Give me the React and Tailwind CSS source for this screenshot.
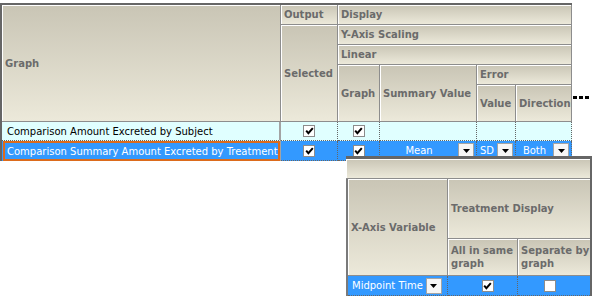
import React from 'react';

const hdr =
  'bg-linear-to-b from-[#c9c5b5] to-[#ece9da] border-r border-b border-[#8d8d8d] shadow-[inset_1px_1px_0_#fff] flex items-center pl-[3px] font-bold text-[#6b6b6b] leading-[13px]';
const cell = 'border-r border-b border-dotted border-[#666] flex items-center';

const Check = ({ checked }) => (
  <span className="w-[12px] h-[12px] border border-[#8c8c8c] bg-white flex items-center justify-center">
    {checked && (
      <svg width="9" height="8" viewBox="0 0 9 8">
        <path d="M1.2 3.6 L3.4 6.2 L7.8 1.2" stroke="#000" strokeWidth="2" fill="none" />
      </svg>
    )}
  </span>
);

const Drop = ({ className = '' }) => (
  <span className={'w-[16px] h-[16px] shrink-0 bg-[#f6f6f6] border border-[#a4a4a4] flex items-center justify-center ' + className}>
    <svg width="7" height="4" viewBox="0 0 7 4">
      <path d="M0 0h7L3.5 4z" fill="#000" />
    </svg>
  </span>
);

export default function App() {
  return (
    <div className="relative w-[595px] h-[298px] bg-white overflow-hidden font-['DejaVu_Sans',sans-serif] text-[10px] text-black">
      <div className="flex items-start">
        {/* grilla principal */}
        <div className="mt-[3px] grid grid-cols-[279px_57px_42px_97px_39px_56px] grid-rows-[20px_20px_20px_20px_37px_19px_20px] border-t-2 border-l-2 border-[#666]">
          <div className={hdr + ' col-start-1 row-start-1 row-span-5'}>Graph</div>
          <div className={hdr + ' col-start-2 row-start-1'}>Output</div>
          <div className={hdr + ' col-start-3 col-span-4 row-start-1'}>Display</div>
          <div className={hdr + ' col-start-2 row-start-2 row-span-4'}>Selected</div>
          <div className={hdr + ' col-start-3 col-span-4 row-start-2'}>Y-Axis Scaling</div>
          <div className={hdr + ' col-start-3 col-span-4 row-start-3'}>Linear</div>
          <div className={hdr + ' col-start-3 row-start-4 row-span-2'}>Graph</div>
          <div className={hdr + ' col-start-4 row-start-4 row-span-2'}>Summary Value</div>
          <div className={hdr + ' col-start-5 col-span-2 row-start-4'}>Error</div>
          <div className={hdr + ' col-start-5 row-start-5'}>Value</div>
          <div className={hdr + ' col-start-6 row-start-5'}>Direction</div>

          {/* fila 1 */}
          <div className="col-start-1 row-start-6 bg-[#e0ffff] border-r-2 border-r-[#a3a3a3] border-b border-b-[#666] [border-bottom-style:dotted] flex items-center pl-[5px] whitespace-nowrap">
            Comparison Amount Excreted by Subject
          </div>
          <div className={cell + ' col-start-2 row-start-6 bg-[#e0ffff] justify-center'}>
            <Check checked />
          </div>
          <div className={cell + ' col-start-3 row-start-6 bg-[#e0ffff] justify-center'}>
            <Check checked />
          </div>
          <div className={cell + ' col-start-4 row-start-6 bg-[#e0ffff]'} />
          <div className={cell + ' col-start-5 row-start-6 bg-[#e0ffff]'} />
          <div className={cell + ' col-start-6 row-start-6 bg-[#e0ffff]'} />

          {/* fila 2 (seleccionada) */}
          <div className="col-start-1 row-start-7 bg-[#3399ff] border-r-2 border-r-[#a3a3a3] flex items-stretch text-white whitespace-nowrap">
            <div className="flex-1 ml-px border-2 border-[#dc6b1c] flex items-center pl-[2px]">
              Comparison Summary Amount Excreted by Treatment
            </div>
          </div>
          <div className={cell + ' col-start-2 row-start-7 bg-[#3399ff] justify-center'}>
            <Check checked />
          </div>
          <div className={cell + ' col-start-3 row-start-7 bg-[#3399ff] justify-center'}>
            <Check checked />
          </div>
          <div className={cell + ' col-start-4 row-start-7 bg-[#3399ff] text-white'}>
            <span className="flex-1 text-center">Mean</span>
            <Drop className="mr-[2px]" />
          </div>
          <div className={cell + ' col-start-5 row-start-7 bg-[#3399ff] text-white'}>
            <span className="flex-1 text-center">SD</span>
            <Drop className="mr-[2px]" />
          </div>
          <div className={cell + ' col-start-6 row-start-7 bg-[#3399ff] text-white'}>
            <span className="flex-1 text-center">Both</span>
            <Drop className="mr-[2px]" />
          </div>
        </div>

        {/* puntos suspensivos */}
        <div className="mt-[96px] ml-px flex gap-[2px]">
          <span className="w-[4px] h-[3px] bg-black" />
          <span className="w-[4px] h-[3px] bg-black" />
          <span className="w-[4px] h-[3px] bg-black" />
        </div>
      </div>

      {/* panel emergente */}
      <div className="absolute left-[346px] top-[156px] w-[246px] border-t-[3px] border-r-2 border-[#666] bg-white">
        <div className={hdr + ' h-[20px] border-r-0'} />
        <div className="grid grid-cols-[100px_70px_72px] grid-rows-[60px_37px_20px] border-l-2 border-[#7a7a7a]">
          <div className={hdr + ' col-start-1 row-start-1 row-span-2'}>X-Axis Variable</div>
          <div className={hdr + ' col-start-2 col-span-2 row-start-1 border-r-0'}>Treatment Display</div>
          <div className={hdr + ' col-start-2 row-start-2'}>
            All in same
            <br />
            graph
          </div>
          <div className={hdr + ' col-start-3 row-start-2 border-r-0'}>
            Separate by
            <br />
            graph
          </div>

          <div className={cell + ' col-start-1 row-start-3 bg-[#3399ff] text-white pl-[4px]'}>
            <span className="whitespace-nowrap">Midpoint Time</span>
            <Drop className="ml-[3px]" />
          </div>
          <div className={cell + ' col-start-2 row-start-3 bg-[#3399ff] justify-center pl-[10px]'}>
            <Check checked />
          </div>
          <div className={cell + ' col-start-3 row-start-3 bg-[#3399ff] border-r-0 justify-center pr-[8px]'}>
            <Check />
          </div>
        </div>
      </div>
    </div>
  );
}
